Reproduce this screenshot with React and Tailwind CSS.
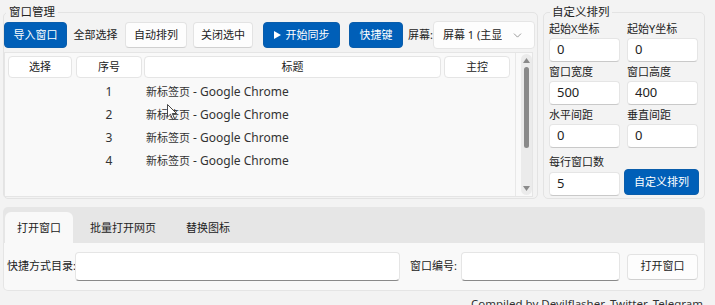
import React from "react";
import { ChevronDown } from "lucide-react";

const rows = [1, 2, 3, 4];

// Plain white Win11-style button
const LightBtn = ({ className = "", children }) => (
  <button className={`h-[26px] bg-[#fdfdfd] border border-[#e3e3e3] border-b-[#d0d0d0] rounded-[4px] text-[11px] text-[#222] flex items-center justify-center ${className}`}>
    {children}
  </button>
);

const BlueBtn = ({ className = "", children }) => (
  <button className={`h-[26px] bg-[#005fb8] border border-[#0a5dab] rounded-[4px] text-[11px] text-white flex items-center justify-center ${className}`}>
    {children}
  </button>
);

const Field = ({ label, value }) => (
  <div className="flex flex-col">
    <div className="h-[19px] leading-[19px]">{label}</div>
    <div className="h-[24px] bg-white border border-[#e5e5e5] border-b-[#c9c9c9] rounded-[4px] pl-[7px] flex items-center text-[13px]">
      {value}
    </div>
  </div>
);

const App = () => {
  return (
    <div className="w-[715px] h-[305px] overflow-hidden bg-[#f3f3f3] text-[11px] text-[#222] font-['Noto_Sans','Noto_Sans_CJK_SC',sans-serif] flex flex-col">
      {/* ── Top: window management + custom layout ── */}
      <div className="flex pt-[5px] pl-[3px]">
        <fieldset className="w-[535px] h-[194px] border border-[#e3e3e3] rounded-[5px]">
          <legend className="ml-[2px] px-[3px] leading-[14px] text-[11.5px]">窗口管理</legend>

          <div className="flex items-center mt-[2px] h-[28px]">
            <BlueBtn className="w-[63px]">导入窗口</BlueBtn>
            <button className="ml-[1px] w-[55px] h-[26px] flex items-center justify-center">全部选择</button>
            <LightBtn className="ml-[2px] w-[62px]">自动排列</LightBtn>
            <LightBtn className="ml-[6px] w-[60px]">关闭选中</LightBtn>
            <BlueBtn className="ml-[10px] w-[77px] gap-[5px]">
              <svg width="7" height="8" viewBox="0 0 7 8"><polygon points="0,0 7,4 0,8" fill="#fff" /></svg>
              开始同步
            </BlueBtn>
            <BlueBtn className="ml-[9px] w-[54px]">快捷键</BlueBtn>
            <span className="ml-[5px] w-[25px] whitespace-nowrap">屏幕:</span>
            <div className="w-[102px] h-[28px] bg-[#fdfdfd] border border-[#e5e5e5] rounded-[4px] flex items-center pl-[9px]">
              <span className="w-[59px] overflow-hidden whitespace-nowrap">屏幕 1 (主显示器)</span>
              <ChevronDown size={13} strokeWidth={1.2} className="ml-[9px] text-[#666]" />
            </div>
          </div>

          {/* table */}
          <div className="mt-[3px] w-[529px] h-[145px] border border-[#e5e5e5] bg-[#f9f9f9] flex">
            <div className="w-[511px] border-r border-[#e8e8e8]">
              <div className="flex pt-[3px] pl-[3px]">
                <div className="w-[64px] h-[22px] bg-white border border-[#e5e5e5] rounded-[4px] flex items-center justify-center">选择</div>
                <div className="ml-[4px] w-[66px] h-[22px] bg-white border border-[#e5e5e5] rounded-[4px] flex items-center justify-center">序号</div>
                <div className="ml-[2px] w-[297px] h-[22px] bg-white border border-[#e5e5e5] rounded-[4px] flex items-center justify-center">标题</div>
                <div className="ml-[3px] w-[66px] h-[22px] bg-white border border-[#e5e5e5] rounded-[4px] flex items-center justify-center">主控</div>
              </div>
              <div className="mt-[2px]">
                {rows.map((n) => (
                  <div key={n} className="relative h-[23px] flex items-center pl-[3px] text-[#333]">
                    <div className="w-[64px]" />
                    <div className="ml-[4px] w-[66px] text-center text-[12px]">{n}</div>
                    <div className="ml-[4px] whitespace-pre">
                      新标签页<span className="text-[12px]"> - Google Chrome</span>
                    </div>
                    {n === 2 && (
                      <svg className="absolute left-[162px] top-[1px]" width="11" height="17" viewBox="0 0 11 17">
                        <path d="M0.5 0.5 L0.5 13 L3.5 10.2 L5.8 15.6 L7.6 14.8 L5.3 9.5 L9.5 9.5 Z" fill="#fff" stroke="#333" strokeWidth="0.9" strokeLinejoin="round" />
                      </svg>
                    )}
                  </div>
                ))}
              </div>
            </div>
            {/* scrollbar */}
            <div className="flex-1 pl-[5px] py-[1px]">
              <div className="w-[11px] h-full rounded-full bg-[#ebebeb] flex flex-col items-center">
                <svg className="mt-[4px]" width="7" height="5" viewBox="0 0 7 5"><polygon points="3.5,0 7,5 0,5" fill="#8a8a8a" /></svg>
                <div className="mt-[4px] w-[5px] h-[81px] rounded-full bg-[#8a8a8a]" />
                <div className="flex-1" />
                <svg className="mb-[4px]" width="7" height="5" viewBox="0 0 7 5"><polygon points="0,0 7,0 3.5,5" fill="#8a8a8a" /></svg>
              </div>
            </div>
          </div>
        </fieldset>

        <fieldset className="ml-[5px] w-[162px] h-[194px] border border-[#e3e3e3] rounded-[5px] px-[5px]">
          <legend className="ml-[1px] px-[2px] leading-[14px] text-[11.5px]">自定义排列</legend>
          <div className="grid grid-cols-2 gap-x-[7px] w-[149px]">
            <Field label="起始X坐标" value="0" />
            <Field label="起始Y坐标" value="0" />
            <Field label="窗口宽度" value="500" />
            <Field label="窗口高度" value="400" />
            <Field label="水平间距" value="0" />
            <Field label="垂直间距" value="0" />
          </div>
          <div className="flex items-end w-[150px]">
            <div className="w-[71px] flex flex-col">
              <div className="mt-[3px] h-[21px] leading-[21px]">每行窗口数</div>
              <div className="h-[24px] bg-white border border-[#e5e5e5] border-b-[#c9c9c9] rounded-[4px] pl-[7px] flex items-center text-[13px]">5</div>
            </div>
            <BlueBtn className="ml-[4px] mb-[1px] w-[75px]">自定义排列</BlueBtn>
          </div>
        </fieldset>
      </div>

      {/* ── Bottom tabs ── */}
      <div className="mt-[8px] ml-[3px] w-[702px]">
        <div className="h-[36px] bg-[#e6e6e6] rounded-t-[5px] flex items-end pl-[2px]">
          <div className="w-[68px] h-[31px] bg-[#f9f9f9] rounded-t-[6px] flex items-center justify-center pt-[2px]">打开窗口</div>
          <div className="ml-[4px] w-[92px] h-[31px] flex items-center justify-center pt-[2px]">批量打开网页</div>
          <div className="ml-[5px] w-[68px] h-[31px] flex items-center justify-center pt-[2px]">替换图标</div>
        </div>
        <div className="h-[48px] bg-[#f9f9f9] border border-t-0 border-[#e5e5e5] rounded-b-[5px] flex items-center pl-[3px]">
          <span className="w-[68px] whitespace-nowrap">快捷方式目录:</span>
          <div className="w-[325px] h-[29px] bg-white border border-[#e5e5e5] border-b-[#8a8a8a] rounded-[4px]" />
          <span className="ml-[10px] w-[51px] whitespace-nowrap">窗口编号:</span>
          <div className="w-[159px] h-[29px] bg-white border border-[#e5e5e5] border-b-[#8a8a8a] rounded-[4px]" />
          <LightBtn className="ml-[7px] w-[71px]">打开窗口</LightBtn>
        </div>
      </div>

      <div className="mt-[5px] pr-[12px] flex justify-end gap-[5px] leading-[16px] text-[11.5px] text-[#333] whitespace-nowrap">
        <span>Compiled by Devilflasher</span>
        <span>Twitter</span>
        <span>Telegram</span>
      </div>
    </div>
  );
};

export default App;
